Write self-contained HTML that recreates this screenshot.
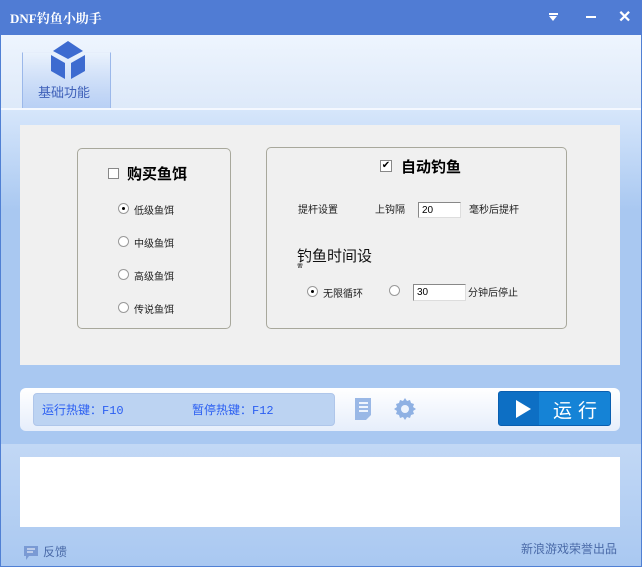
<!DOCTYPE html>
<html><head><meta charset="utf-8"><style>
*{margin:0;padding:0;box-sizing:border-box}
body{width:642px;height:567px;position:relative;overflow:hidden;font-family:"Liberation Sans","Noto Sans CJK SC",sans-serif;background:#a9c8f1}
.a{position:absolute}
.t{white-space:nowrap}
.rad{position:absolute;width:11px;height:11px;border-radius:50%;border:1px solid #999;background:#fff}
.rad.on::after{content:"";position:absolute;left:3px;top:3px;width:3px;height:3px;border-radius:50%;background:#000}
.s{font-size:10px;color:#222}
.inp{position:absolute;background:#fff;border:1px solid #888;border-right-color:#ddd;border-bottom-color:#ddd;font-size:10px;padding:2px 3px}
</style></head><body>
<div class="a" style="left:0;top:0;width:642px;height:35px;background:#507cd4"></div>
<div class="a t" style="left:10px;top:8px;color:#fff;font-size:13px;font-weight:bold;font-family:'Liberation Serif','Noto Serif CJK SC',serif">DNF钓鱼小助手</div>
<div class="a" style="left:549px;top:13px;width:9px;height:2px;background:#fff"></div>
<div class="a" style="left:549px;top:16px;width:0;height:0;border-left:4.5px solid transparent;border-right:4.5px solid transparent;border-top:5px solid #fff"></div>
<div class="a" style="left:586px;top:16px;width:10px;height:2px;background:#fff"></div>
<div class="a t" style="left:618px;top:7px;color:#fff;font-size:16px;font-weight:bold">✕</div>
<div class="a" style="left:0;top:35px;width:642px;height:74px;background:linear-gradient(#eef5fe,#dde9f9)"></div>
<div class="a" style="left:22px;top:52px;width:89px;height:56px;border:1px solid #9bb8ea;border-bottom:none;border-top-color:#e6eefb;background:linear-gradient(rgba(255,255,255,0),#b9d0f5)"></div>
<svg class="a" style="left:50px;top:40px" width="36" height="40" viewBox="0 0 36 40"><path d="M18 1 L33 11 L18 19 L3 11Z" fill="#3d6bd0"/><path d="M1 15 L15 23 L15 39 L1 31Z" fill="#3d6bd0"/><path d="M35 15 L21 23 L21 39 L35 31Z" fill="#3d6bd0"/></svg>
<div class="a t" style="left:38px;top:82px;color:#3d5fb8;font-size:13px">基础功能</div>
<div class="a" style="left:0;top:108px;width:642px;height:2px;background:#f4f8ff"></div>
<div class="a" style="left:0;top:110px;width:642px;height:334px;background:linear-gradient(#d6e6fb,#a9c8f1 30%)"></div>
<div class="a" style="left:20px;top:125px;width:600px;height:240px;background:#f0f0f0"></div>
<div class="a" style="left:77px;top:148px;width:154px;height:181px;border:1px solid #a8a89c;border-radius:5px"></div>
<div class="a" style="left:108px;top:168px;width:11px;height:11px;border:1px solid #888;background:#fff"></div>
<div class="a t" style="left:127px;top:163px;font-size:15px;font-weight:bold">购买鱼饵</div>
<div class="rad on" style="left:118px;top:203px"></div><div class="a t s" style="left:134px;top:202px">低级鱼饵</div>
<div class="rad" style="left:118px;top:236px"></div><div class="a t s" style="left:134px;top:235px">中级鱼饵</div>
<div class="rad" style="left:118px;top:269px"></div><div class="a t s" style="left:134px;top:268px">高级鱼饵</div>
<div class="rad" style="left:118px;top:302px"></div><div class="a t s" style="left:134px;top:301px">传说鱼饵</div>
<div class="a" style="left:266px;top:147px;width:301px;height:182px;border:1px solid #a8a89c;border-radius:5px"></div>
<div class="a" style="left:380px;top:160px;width:12px;height:12px;border:1px solid #888;background:#fff;font-size:10px;line-height:10px;text-align:center">✔</div>
<div class="a t" style="left:401px;top:156px;font-size:15px;font-weight:bold">自动钓鱼</div>
<div class="a t s" style="left:298px;top:201px">提杆设置</div>
<div class="a t s" style="left:375px;top:201px">上钩隔</div>
<div class="inp" style="left:418px;top:202px;width:43px;height:16px">20</div>
<div class="a t s" style="left:469px;top:201px">毫秒后提杆</div>
<div class="a t" style="left:297px;top:245px;font-size:15px;color:#111">钓鱼时间设</div>
<div class="a t" style="left:297px;top:262px;font-size:6px;color:#111;height:6px;overflow:hidden">置</div>
<div class="rad on" style="left:307px;top:286px"></div><div class="a t s" style="left:323px;top:285px">无限循环</div>
<div class="rad" style="left:389px;top:285px"></div>
<div class="inp" style="left:413px;top:284px;width:53px;height:17px">30</div>
<div class="a t s" style="left:468px;top:284px">分钟后停止</div>
<div class="a" style="left:20px;top:388px;width:600px;height:43px;border-radius:6px;background:linear-gradient(#fff,#e6eefb)"></div>
<div class="a" style="left:33px;top:393px;width:302px;height:33px;border-radius:4px;background:#bcd3f2;border:1px solid #afc6ea"></div>
<div class="a t" style="left:42px;top:401px;font-size:12px;color:#2a5ef2;font-family:'Liberation Mono','Noto Sans CJK SC',monospace">运行热键：F10</div>
<div class="a t" style="left:192px;top:401px;font-size:12px;color:#2a5ef2;font-family:'Liberation Mono','Noto Sans CJK SC',monospace">暂停热键：F12</div>
<svg class="a" style="left:352px;top:397px" width="22" height="24" viewBox="0 0 22 24"><path d="M3 1h16v17l-5 5H3z" fill="#9ab8e6"/><path d="M7 6h9M7 10h9M7 14h9" stroke="#eef4fd" stroke-width="2"/></svg>
<svg class="a" style="left:393px;top:397px" width="24" height="24" viewBox="0 0 24 24"><path d="M12 1l2 3 3-1 1 3 3 1-1 3 3 2-3 2 1 3-3 1-1 3-3-1-2 3-2-3-3 1-1-3-3-1 1-3-3-2 3-2-1-3 3-1 1-3 3 1z" fill="#8fb1e3"/><circle cx="12" cy="12" r="4" fill="#eef4fd"/></svg>
<div class="a" style="left:498px;top:391px;width:113px;height:35px;border-radius:3px;background:linear-gradient(90deg,#0d6fc4 0 36%,#1583d6 36%);border:1px solid #0a5fb0"></div>
<div class="a" style="left:516px;top:400px;width:0;height:0;border-top:9px solid transparent;border-bottom:9px solid transparent;border-left:15px solid #fff"></div>
<div class="a t" style="left:553px;top:396px;font-size:19px;color:#fff;letter-spacing:6px">运行</div>
<div class="a" style="left:0;top:444px;width:642px;height:123px;background:linear-gradient(#c2d8f5,#a9c8f1)"></div>
<div class="a" style="left:20px;top:457px;width:600px;height:70px;background:#fff"></div>
<svg class="a" style="left:23px;top:545px" width="16" height="16" viewBox="0 0 16 16"><path d="M1 1h14v10H6l-3 4v-4H1z" fill="#7a9ad4"/><path d="M4 4h8M4 7h6" stroke="#fff"/></svg>
<div class="a t" style="left:43px;top:543px;font-size:12px;color:#4a6aa8">反馈</div>
<div class="a t" style="left:521px;top:540px;font-size:12px;color:#4a6aa8">新浪游戏荣誉出品</div>
<div class="a" style="left:0;top:566px;width:642px;height:1px;background:#5080d4"></div>
<div class="a" style="left:0;top:35px;width:1px;height:532px;background:#5080d4"></div>
<div class="a" style="left:641px;top:35px;width:1px;height:532px;background:#5080d4"></div>
</body></html>
